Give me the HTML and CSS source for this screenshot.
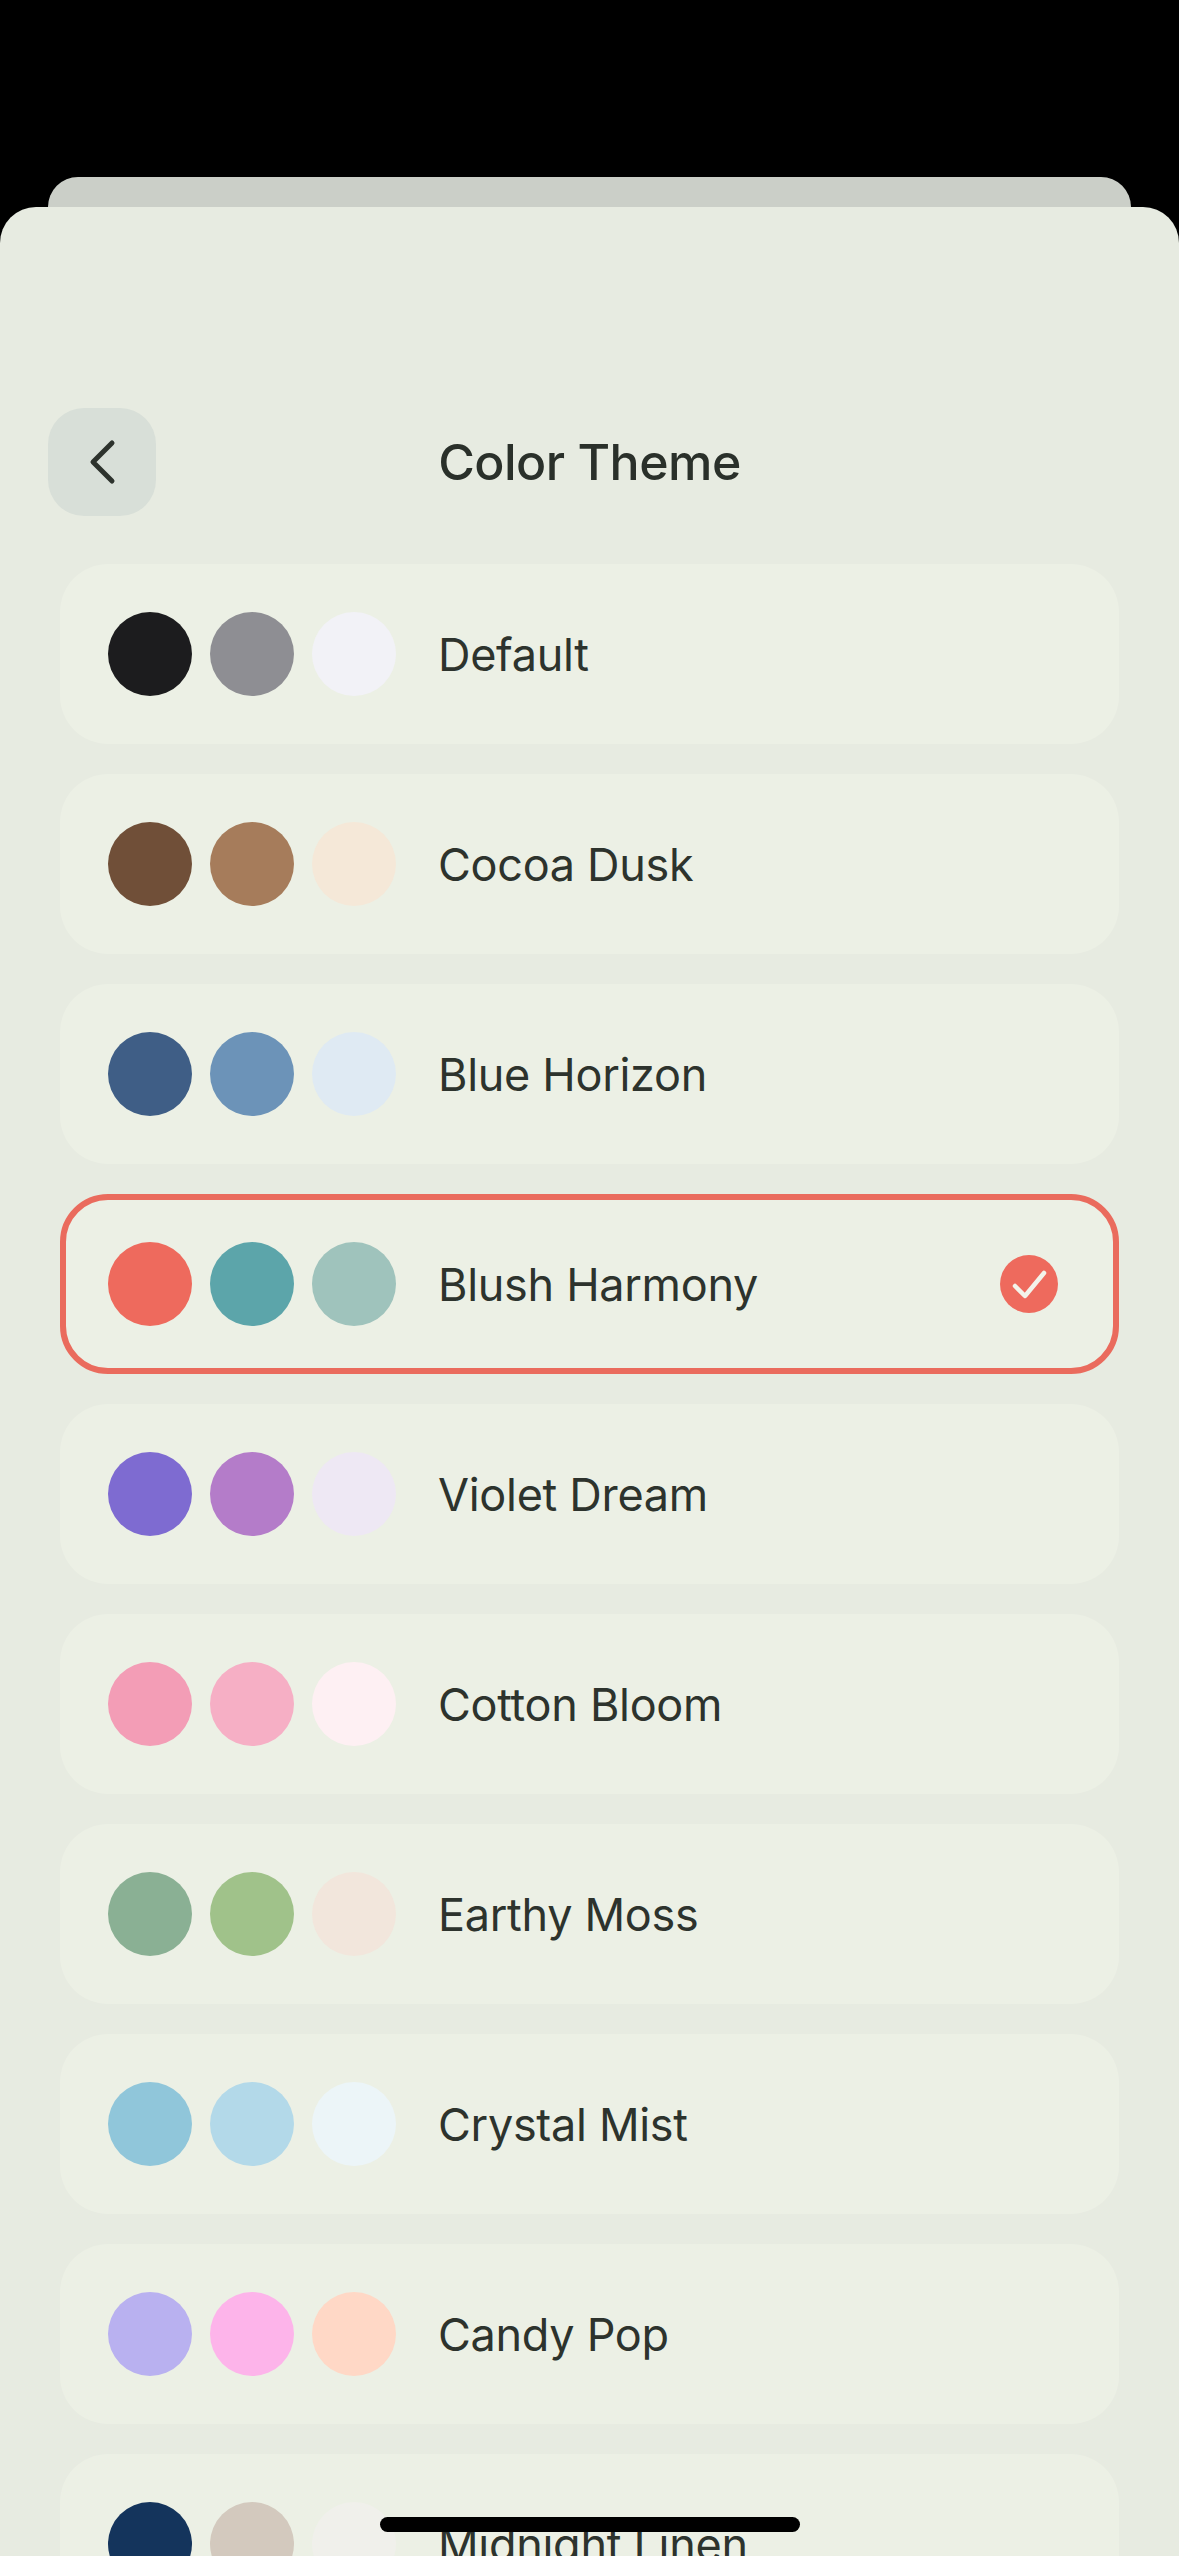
FILE: index.html
```html
<!DOCTYPE html>
<html>
<head>
<meta http-equiv="Content-Type" content="text/html; charset=UTF-8">
<title>Color Theme</title>
<link rel="stylesheet" href="styles.css">
</head>
<body>
<div class="back-sheet"></div>
<div class="sheet">
  <div class="header">
    <div class="back-button">
      <svg width="36" height="48" viewBox="0 0 36 48"><path d="M28 5 L9 24 L28 43" fill="none" stroke="#2d332d" stroke-width="5" stroke-linecap="round" stroke-linejoin="round"/></svg>
    </div>
    <h1 class="title">Color Theme</h1>
  </div>

  <div class="theme-list">
    <div class="theme-row">
      <span class="swatch default-1"></span><span class="swatch default-2"></span><span class="swatch default-3"></span>
      <span class="theme-name">Default</span>
    </div>
    <div class="theme-row">
      <span class="swatch cocoa-1"></span><span class="swatch cocoa-2"></span><span class="swatch cocoa-3"></span>
      <span class="theme-name">Cocoa Dusk</span>
    </div>
    <div class="theme-row">
      <span class="swatch blue-1"></span><span class="swatch blue-2"></span><span class="swatch blue-3"></span>
      <span class="theme-name">Blue Horizon</span>
    </div>
    <div class="theme-row selected">
      <span class="swatch blush-1"></span><span class="swatch blush-2"></span><span class="swatch blush-3"></span>
      <span class="theme-name">Blush Harmony</span>
      <span class="check">
        <svg width="58" height="58" viewBox="0 0 58 58"><path d="M15 31 L25 41 L44 18" fill="none" stroke="#f3f3ea" stroke-width="4.5" stroke-linecap="round" stroke-linejoin="round"/></svg>
      </span>
    </div>
    <div class="theme-row">
      <span class="swatch violet-1"></span><span class="swatch violet-2"></span><span class="swatch violet-3"></span>
      <span class="theme-name">Violet Dream</span>
    </div>
    <div class="theme-row">
      <span class="swatch cotton-1"></span><span class="swatch cotton-2"></span><span class="swatch cotton-3"></span>
      <span class="theme-name">Cotton Bloom</span>
    </div>
    <div class="theme-row">
      <span class="swatch moss-1"></span><span class="swatch moss-2"></span><span class="swatch moss-3"></span>
      <span class="theme-name">Earthy Moss</span>
    </div>
    <div class="theme-row">
      <span class="swatch mist-1"></span><span class="swatch mist-2"></span><span class="swatch mist-3"></span>
      <span class="theme-name">Crystal Mist</span>
    </div>
    <div class="theme-row">
      <span class="swatch candy-1"></span><span class="swatch candy-2"></span><span class="swatch candy-3"></span>
      <span class="theme-name">Candy Pop</span>
    </div>
    <div class="theme-row">
      <span class="swatch linen-1"></span><span class="swatch linen-2"></span><span class="swatch linen-3"></span>
      <span class="theme-name">Midnight Linen</span>
    </div>
  </div>
</div>
<div class="home-bar"></div>
</body>
</html>
```

FILE: styles.css
```css
html, body {
  margin: 0;
  height: 2556px;
  overflow: hidden;
}
body {
  position: relative;
  background-color: #000;
  font-family: Inter, "Noto Sans", sans-serif;
  color: #2d332d;
  padding-top: 177px;
  box-sizing: border-box;
}
.back-sheet {
  height: 30px;
  margin: 0 48px;
  background-color: #cbcfc8;
  border-radius: 30px 30px 0 0;
}
.sheet {
  height: 2349px;
  overflow: hidden;
  background-color: #e7ebe1;
  border-radius: 36px 36px 0 0;
  padding-top: 201px;
  box-sizing: border-box;
}
.header {
  display: grid;
  grid-template-columns: 108px 1fr 108px;
  align-items: center;
  padding: 0 48px;
}
.back-button {
  width: 108px;
  height: 108px;
  border-radius: 36px;
  background-color: #d8dfd8;
  display: flex;
  justify-content: center;
  align-items: center;
}
.title {
  margin: 0;
  text-align: center;
  font-size: 50px;
  font-weight: 550;
  letter-spacing: -0.5px;
  color: #2a302a;
}
.theme-list {
  display: flex;
  flex-direction: column;
  gap: 30px;
  margin-top: 48px;
  padding: 0 60px;
}
.theme-row {
  flex: none;
  height: 180px;
  box-sizing: border-box;
  display: flex;
  align-items: center;
  gap: 18px;
  padding: 0 55px 0 42px;
  border: 6px solid transparent;
  border-radius: 48px;
  background-color: #ecf0e5;
}
.theme-row.selected {
  border-color: #ea6b5d;
}
.swatch {
  flex: none;
  width: 84px;
  height: 84px;
  border-radius: 50%;
}
.theme-name {
  flex: 1;
  margin-left: 24px;
  font-size: 45px;
  letter-spacing: -0.3px;
}
.check {
  flex: none;
  width: 58px;
  height: 58px;
  border-radius: 50%;
  background-color: #ee6a5d;
}
.check svg {
  display: block;
}
.home-bar {
  position: absolute;
  left: 380px;
  top: 2517px;
  width: 420px;
  height: 15px;
  border-radius: 8px;
  background-color: #000;
}

.default-1 { background-color: #1c1c1e; }
.default-2 { background-color: #8e8e93; }
.default-3 { background-color: #f2f2f7; }
.cocoa-1 { background-color: #704f38; }
.cocoa-2 { background-color: #a67c5b; }
.cocoa-3 { background-color: #f5e8d8; }
.blue-1 { background-color: #3f5e86; }
.blue-2 { background-color: #6c93b8; }
.blue-3 { background-color: #dfeaf3; }
.blush-1 { background-color: #ee6a5d; }
.blush-2 { background-color: #5ca5aa; }
.blush-3 { background-color: #9fc3bc; }
.violet-1 { background-color: #7e6bd1; }
.violet-2 { background-color: #b47cc9; }
.violet-3 { background-color: #eee8f4; }
.cotton-1 { background-color: #f39db6; }
.cotton-2 { background-color: #f6afc5; }
.cotton-3 { background-color: #fef0f3; }
.moss-1 { background-color: #8ab094; }
.moss-2 { background-color: #a0c28a; }
.moss-3 { background-color: #f2e6dc; }
.mist-1 { background-color: #90c6da; }
.mist-2 { background-color: #b3d9e9; }
.mist-3 { background-color: #ecf5f8; }
.candy-1 { background-color: #b9b1f0; }
.candy-2 { background-color: #fdb4ea; }
.candy-3 { background-color: #ffd8c6; }
.linen-1 { background-color: #14345c; }
.linen-2 { background-color: #d3c9be; }
.linen-3 { background-color: #f0f0eb; }
```
